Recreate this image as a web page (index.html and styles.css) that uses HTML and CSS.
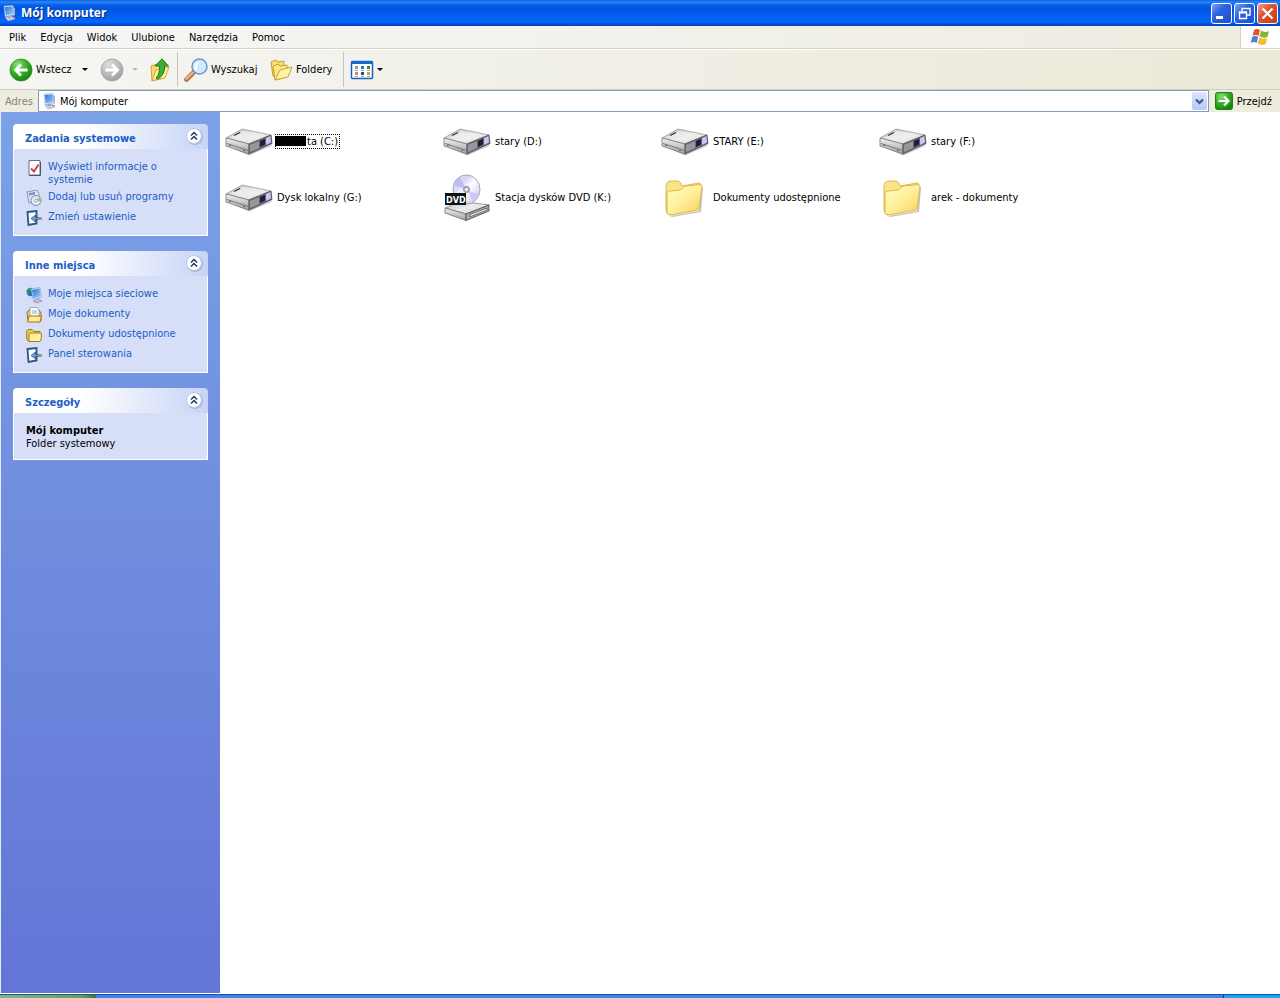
FILE: index.html
```html
<!DOCTYPE html>
<html lang="pl">
<head>
<meta charset="utf-8">
<title>Mój komputer</title>
<link rel="stylesheet" href="styles.css">
</head>
<body>
<svg class="sprite" aria-hidden="true">
  <defs>
    <linearGradient id="gTop" x1="0" y1="0" x2="1" y2="1"><stop offset="0" stop-color="#b4b4b8"/><stop offset=".5" stop-color="#ececec"/><stop offset="1" stop-color="#d4d4d8"/></linearGradient>
    <linearGradient id="gSide" x1="0" y1="0" x2="0" y2="1"><stop offset="0" stop-color="#f4f4f4"/><stop offset="1" stop-color="#9d9da1"/></linearGradient>
    <linearGradient id="gDark" x1="0" y1="0" x2="1" y2="0"><stop offset="0" stop-color="#77777b"/><stop offset="1" stop-color="#5c5c6c"/></linearGradient>
    <linearGradient id="gFolder" x1="0" y1="0" x2="1" y2="1"><stop offset="0" stop-color="#fffbc4"/><stop offset=".5" stop-color="#fff09a"/><stop offset="1" stop-color="#f5cf52"/></linearGradient>
    <linearGradient id="gDisc" x1="0" y1="0" x2="1" y2="1"><stop offset="0" stop-color="#f8f8ff"/><stop offset=".3" stop-color="#d4d4f6"/><stop offset=".5" stop-color="#ffffff"/><stop offset=".75" stop-color="#dcdcf6"/><stop offset="1" stop-color="#ececf6"/></linearGradient>
    <radialGradient id="gGreen" cx=".35" cy=".25" r=".8"><stop offset="0" stop-color="#8fe07a"/><stop offset=".5" stop-color="#37b127"/><stop offset="1" stop-color="#15850f"/></radialGradient>
    <radialGradient id="gGrey" cx=".35" cy=".25" r=".8"><stop offset="0" stop-color="#dedede"/><stop offset=".6" stop-color="#b9b9b9"/><stop offset="1" stop-color="#9e9e9e"/></radialGradient>
    <linearGradient id="gScreen" x1="0" y1="0" x2="1" y2="1"><stop offset="0" stop-color="#2d6fd8"/><stop offset="1" stop-color="#8ed2ff"/></linearGradient>
    <symbol id="drive" viewBox="0 0 48 48">
      <path d="M2 29 24 37 47 27.500 46 29 24 38.500z" fill="#8b8b8b" opacity=".5"/>
      <path d="M1 21 17 12 46 18 24 27z" fill="url(#gTop)" stroke="#929296" stroke-width=".7"/>
      <path d="M6 20.500 18 14 40 18.500 24 25z" fill="#f0f0f0" opacity=".7"/>
      <path d="M1 21 24 27V37L1 29z" fill="url(#gSide)" stroke="#77777b" stroke-width=".8"/>
      <path d="M24 27 46 18 47 26.500 24 37z" fill="url(#gDark)" stroke="#4c4c50" stroke-width=".8"/>
      <path d="M25 28 34 24.300V31L25 35z" fill="#98989c"/>
      <path d="M35 24 40 22V27.500L35 30z" fill="#1c1c44"/>
      <path d="M41 21 45.500 19 46 25.500 41 28z" fill="#c7c7ed"/>
      <path d="M2 26.500 23.500 33.500" fill="none" stroke="#77777b"/>
      <path d="M9 18.500 15 15.500" stroke="#333" stroke-width="1.300"/>
      <path d="M4 28.500h2M18 33.500h2" stroke="#4b7a50"/>
    </symbol>
    <symbol id="dvd" viewBox="0 0 48 48">
      <path d="M2 35 16 28 46 32 23 41z" fill="url(#gTop)" stroke="#828286" stroke-width=".8"/>
      <path d="M2 35 23 41V47.500L2 40z" fill="url(#gSide)" stroke="#6f6f73" stroke-width=".8"/>
      <path d="M23 41 46 32V38L23 47.500z" fill="#aaaaae" stroke="#444" stroke-width=".8"/>
      <path d="M27 41.500 44 35V37L27 43.800z" fill="#eee" stroke="#333" stroke-width=".6"/>
      <ellipse cx="23.500" cy="16.500" rx="13.500" ry="14.500" fill="url(#gDisc)" stroke="#a4a4ae"/>
      <path d="M23 16 17 3.500Q11 6 10 12z" fill="#b5b4ef" opacity=".75"/>
      <path d="M25 18 36 21Q35 26 30 29z" fill="#c6c4f3" opacity=".8"/>
      <circle cx="23.500" cy="16.500" r="3" fill="#b9b9c6" stroke="#85858f"/>
      <circle cx="23.500" cy="16.500" r="1.300" fill="#fff"/>
      <path d="M2 20h21v12H2z" fill="#061313"/>
      <text class="dvd-text" x="3" y="30">DVD</text>
    </symbol>
    <symbol id="folder" viewBox="0 0 48 48">
      <path d="M9 43 38 38 41 14 42 15 40 39 11 44z" fill="#777" opacity=".45"/>
      <path d="M5 14Q5 8 10 8L17 8Q20 9 21 13L38 10Q40 10 40 13L37 36 8 42Q5 40 5 36z" fill="#f9e48a" stroke="#d2ab3b" stroke-width=".8"/>
      <path d="M6 20Q6 18 9 18L19 17 24 13 39 11.500Q41 11.500 41 14L38 35Q38 37 35 37.500L9 42Q6 42 6 39z" fill="url(#gFolder)" stroke="#d3ac3e" stroke-width=".8"/>
    </symbol>
    <symbol id="computer" viewBox="0 0 16 16">
      <path d="M3 12 10 11 13 14 6 16z" fill="#d6d0e0" stroke="#9a92b4" stroke-width=".6"/>
      <path d="M5 11 9 10V13L6 13.500z" fill="#aaa6c4"/>
      <path d="M11 2 13 3V10L11 11z" fill="#b1aec6"/>
      <path d="M2 1 11 .5 12 10 3 11.500z" fill="#dfe8f6" stroke="#90a4cb" stroke-width=".5"/>
      <path d="M2.800 2 10.500 1.500 11.200 9 3.800 10.200z" fill="url(#gScreen)"/>
      <path d="M10 12.500h3" stroke="#e4746a"/>
    </symbol>
    <symbol id="panel" viewBox="0 0 16 16">
      <path d="M1.500 2 10.500 1V13.500L2.500 15z" fill="#fff" stroke="#28548a" stroke-width="1.800"/>
      <path d="M5 8.500 9.500 5V7.500H13V9.500H9.500V12z" fill="#6f9fd5" stroke="#244b7c" stroke-width=".7"/>
      <path d="M12 8.500h4" stroke="#87947d" stroke-width="2.500"/>
    </symbol>
    <symbol id="chevron" viewBox="0 0 18 18">
      <circle cx="10" cy="10" r="8" fill="#8d99bb" opacity=".55"/>
      <circle cx="9" cy="9" r="7.500" fill="#fff" stroke="#bac5e2"/>
      <path d="M6 8.500 9 5.500 12 8.500M6 12.500 9 9.500 12 12.500" fill="none" stroke="#1b2c66" stroke-width="1.400"/>
    </symbol>
  </defs>
</svg>

<div class="window">
  <header class="titlebar">
    <svg class="icon16"><use href="#computer"/></svg>
    <h1 class="title">Mój komputer</h1>
    <button class="caption-btn" aria-label="Minimalizuj"><svg viewBox="0 0 19 19"><path d="M4 12h7v3H4z" fill="#fff"/></svg></button>
    <button class="caption-btn" aria-label="Przywróć"><svg viewBox="0 0 19 19"><path d="M7 7V4.500h8V11h-3M7 4.500h8M4.500 8h7v6.500h-7zM4.500 8.700h7" fill="none" stroke="#fff" stroke-width="1.400"/></svg></button>
    <button class="caption-btn caption-close" aria-label="Zamknij"><svg viewBox="0 0 19 19"><path d="M4.500 4.500l10 10m0-10l-10 10" stroke="#fff" stroke-width="2.200"/></svg></button>
  </header>

  <nav class="menubar" aria-label="Menu">
    <button>Plik</button><button>Edycja</button><button>Widok</button><button>Ulubione</button><button>Narzędzia</button><button>Pomoc</button>
    <span class="flag">
      <svg viewBox="0 0 22 20">
        <path d="M5 3Q8 1 11 3L9.500 9Q6.500 7 3.500 9z" fill="#e5532d"/>
        <path d="M12 3.500Q16 6 20 4L18.500 10Q14.500 11.500 10.500 9.500z" fill="#83b53a"/>
        <path d="M3.200 10Q6 8 9.200 10L7.700 16Q5 14 1.700 16z" fill="#4a7fd8"/>
        <path d="M10.200 10.500Q14 12.500 18.200 11L16.700 17Q12.500 19 8.700 16.500z" fill="#f6bb33"/>
      </svg>
    </span>
  </nav>

  <div class="toolbar">
    <button class="tool tool-back">
      <svg class="icon24" viewBox="0 0 24 24"><circle cx="12" cy="12" r="11" fill="url(#gGreen)" stroke="#2a8a20" stroke-width=".8"/><path d="M18.500 12H7M12 6.500 6.500 12 12 17.500" fill="none" stroke="#fff" stroke-width="2.800"/></svg>
      <span>Wstecz</span><i class="caret"></i>
    </button>
    <button class="tool tool-forward" aria-label="Dalej" disabled>
      <svg class="icon24" viewBox="0 0 24 24"><circle cx="12" cy="12" r="11" fill="url(#gGrey)" stroke="#a2a2a2" stroke-width=".8"/><path d="M5.500 12H17M12 6.500 17.500 12 12 17.500" fill="none" stroke="#fff" stroke-width="2.800"/></svg>
      <i class="caret caret-off"></i>
    </button>
    <button class="tool tool-up" aria-label="Do góry">
      <svg class="icon24" viewBox="0 0 24 24"><path d="M3 8 9 6 11 8 17 7V12L16 20 4 23z" fill="#f7dc6f" stroke="#c79c30" stroke-width=".9"/><path d="M4 22.500 8 12 21 9 17 20z" fill="#fff0a0" stroke="#cda338" stroke-width=".9"/><path d="M8 20Q12 16 11.500 8H7L14 .8 20.500 8H16.500Q17.500 16 10 21z" fill="#3cae32" stroke="#17751a" stroke-width=".9"/></svg>
    </button>
    <span class="divider"></span>
    <button class="tool tool-search">
      <svg class="icon24" viewBox="0 0 24 24"><path d="M2.500 21.500 9.500 14.500" stroke="#b5704c" stroke-width="4.600" stroke-linecap="round"/><path d="M2.500 20.700 9 14.500" stroke="#f2b08a" stroke-width="2.400" stroke-linecap="round"/><circle cx="15.500" cy="8.500" r="7.500" fill="#cfeaff" stroke="#6e93c8" stroke-width="1.400"/><path d="M10.500 8Q11 4 15.500 3.500 12.500 8 13 13 10 11 10.500 8z" fill="#fff"/></svg>
      <span>Wyszukaj</span>
    </button>
    <button class="tool tool-folders">
      <svg class="icon24" viewBox="0 0 24 24"><path d="M2 4 7 2 9 4 15 3V15L4 18z" fill="#f9df74" stroke="#c79d32"/><path d="M4 8 9 6 11 8 18 7V19L6 22z" fill="#fbe584" stroke="#c79d32"/><path d="M6 22 11 12 23 9 19 19z" fill="#fff2a6" stroke="#cda338"/></svg>
      <span>Foldery</span>
    </button>
    <span class="divider"></span>
    <button class="tool tool-views" aria-label="Widoki">
      <svg class="icon24" viewBox="0 0 24 24"><rect x="1.500" y="3.500" width="21" height="17" rx="1" fill="#fff" stroke="#1760bd" stroke-width="1.500"/><path d="M1 3h22v3H1z" fill="#1669cf"/><path d="M5 8h3v3H5z" fill="#839cc0"/><path d="M11 8h3v3h-3z" fill="#3470ba"/><path d="M17 8h3v3h-3z" fill="#2e942e"/><path d="M5 14h3v3H5z" fill="#e08742"/><path d="M11 14h3v3h-3z" fill="#204c8c"/><path d="M17 14h3v3h-3z" fill="#e29a38"/><path d="M5 12.500h3m3 0h3m3 0h3M5 18.500h3m3 0h3m3 0h3" stroke="#999" stroke-width=".9"/></svg>
      <i class="caret"></i>
    </button>
  </div>

  <form class="addressbar">
    <label for="address">Adres</label>
    <div class="combo">
      <svg class="icon16"><use href="#computer"/></svg>
      <input id="address" type="text" value="Mój komputer">
      <button type="button" class="drop" aria-label="Rozwiń"><svg viewBox="0 0 15 17"><path d="M4 6.500 7.500 10 11 6.500" fill="none" stroke="#3d5684" stroke-width="2.200"/></svg></button>
    </div>
    <button type="button" class="go">
      <svg viewBox="0 0 18 18"><rect x=".5" y=".5" width="17" height="17" rx="2" fill="url(#gGreen)" stroke="#197f19"/><path d="M3.500 9H13M9 4.500 13.500 9 9 13.500" fill="none" stroke="#fff" stroke-width="2.200"/></svg>
      <span>Przejdź</span>
    </button>
  </form>

  <div class="content">
    <aside class="sidebar">
      <section class="panel">
        <header><h2>Zadania systemowe</h2><button aria-label="Zwiń"><svg><use href="#chevron"/></svg></button></header>
        <ul>
          <li><a href="#"><svg class="icon16" viewBox="0 0 16 16"><path d="M3 .5H14V15H3z" fill="#fff" stroke="#6a6f93"/><path d="M3 15.500h11.500V2" fill="none" stroke="#4b4f70"/><path d="M5 8.500 8 11.500 12.500 4.500" fill="none" stroke="#d5402d" stroke-width="1.900"/></svg><span>Wyświetl informacje o systemie</span></a></li>
          <li><a href="#"><svg class="icon16" viewBox="0 0 16 16"><path d="M1 2 11 0 13 4V12L3 13z" fill="#dbe5f7" stroke="#8298bf"/><path d="M3 3 9 2V4.500L3 5.500z" fill="#6f94cf"/><circle cx="10" cy="10.500" r="5" fill="#e6ebf5" stroke="#7c89a8"/><path d="M10 10 14 7Q16 9 14.500 12z" fill="#91ca82"/><circle cx="10" cy="10.500" r="1.400" fill="#fff" stroke="#7c89a8" stroke-width=".7"/></svg><span>Dodaj lub usuń programy</span></a></li>
          <li><a href="#"><svg class="icon16"><use href="#panel"/></svg><span>Zmień ustawienie</span></a></li>
        </ul>
      </section>
      <section class="panel">
        <header><h2>Inne miejsca</h2><button aria-label="Zwiń"><svg><use href="#chevron"/></svg></button></header>
        <ul>
          <li><a href="#"><svg class="icon16" viewBox="0 0 16 16"><circle cx="4.500" cy="5" r="4.200" fill="#3aa453"/><path d="M1 3Q3 6 2 8Q6 10 8 8L6 4z" fill="#256fc2"/><path d="M5 2 14 .5 15.500 10 7 12z" fill="#d4e2f8" stroke="#6e86bc" stroke-width=".5"/><path d="M6 3 13.400 1.500 14.600 9.300 7.500 11z" fill="url(#gScreen)"/><path d="M7 14 13 12 16 14 10 16z" fill="#cfbede" stroke="#8e78aa" stroke-width=".7"/></svg><span>Moje miejsca sieciowe</span></a></li>
          <li><a href="#"><svg class="icon16" viewBox="0 0 16 16"><path d="M1 5 3 3H13L15 6V14H2z" fill="#f3cc54" stroke="#9e7322"/><path d="M4 .5H11L13 3V10H4z" fill="#fff" stroke="#7d94bc" stroke-width=".8"/><path d="M6 4h5M6 6h5" stroke="#87a5d7"/><path d="M3 9H15.500L14 15H1.500z" fill="#ffeb91" stroke="#9e7322"/></svg><span>Moje dokumenty</span></a></li>
          <li><a href="#"><svg class="icon16" viewBox="0 0 16 16"><path d="M.7 4 2 2.500H6L8 4.500H14V14H2L.7 12z" fill="#f1c94f" stroke="#a77d24"/><path d="M3 7.500Q3 6 5 6H15.300V12L14 14.500H3z" fill="#fff09b" stroke="#a77d24"/></svg><span>Dokumenty udostępnione</span></a></li>
          <li><a href="#"><svg class="icon16"><use href="#panel"/></svg><span>Panel sterowania</span></a></li>
        </ul>
      </section>
      <section class="panel">
        <header><h2>Szczegóły</h2><button aria-label="Zwiń"><svg><use href="#chevron"/></svg></button></header>
        <div class="details"><strong>Mój komputer</strong><p>Folder systemowy</p></div>
      </section>
    </aside>

    <main class="files">
      <a class="file" href="#"><svg><use href="#drive"/></svg><span class="focused"><i class="mask"></i>ta (C:)</span></a>
      <a class="file" href="#"><svg><use href="#drive"/></svg><span>stary (D:)</span></a>
      <a class="file" href="#"><svg><use href="#drive"/></svg><span>STARY (E:)</span></a>
      <a class="file" href="#"><svg><use href="#drive"/></svg><span>stary (F:)</span></a>
      <a class="file" href="#"><svg><use href="#drive"/></svg><span>Dysk lokalny (G:)</span></a>
      <a class="file" href="#"><svg><use href="#dvd"/></svg><span>Stacja dysków DVD (K:)</span></a>
      <a class="file" href="#"><svg><use href="#folder"/></svg><span>Dokumenty udostępnione</span></a>
      <a class="file" href="#"><svg><use href="#folder"/></svg><span>arek - dokumenty</span></a>
    </main>
  </div>
  <footer class="taskbar"><span class="start"></span><span class="tray"></span></footer>
</div>
</body>
</html>
```
FILE: styles.css
```css
* { box-sizing: border-box; }

body {
  margin: 0;
  font: 11px/13px "DejaVu Sans Condensed", "DejaVu Sans", sans-serif;
  color: #000;
}

button, input { font: inherit; color: inherit; border: 0; padding: 0; margin: 0; background: none; }
h1, h2, p, ul { margin: 0; padding: 0; }
ul { list-style: none; }
a { color: inherit; text-decoration: none; }
svg { display: block; flex: none; }

.sprite { position: absolute; width: 0; height: 0; }
.icon16 { width: 16px; height: 16px; }
.icon24 { width: 24px; height: 24px; }

.window { display: flex; flex-direction: column; min-height: 100vh; background: #fff; }

.titlebar {
  display: flex;
  align-items: center;
  gap: 2px;
  height: 26px;
  padding: 0 2px;
  background: linear-gradient(#0a5ddd 0, #2a86fb 2px, #0860e6 5px, #0055e0 9px, #0462f5 18px, #0566fa 22px, #0048c8 25px, #0040b4 26px);
}
.title {
  flex: 1;
  padding-left: 1px;
  font: bold 12px/16px "Open Sans", sans-serif;
  color: #fff;
  text-shadow: 1px 1px 1px #0a2a80;
}
.caption-btn {
  width: 21px;
  height: 21px;
  border: 1px solid #fff;
  border-radius: 3px;
  background: linear-gradient(135deg, #7ba1f3, #2b62e0 40%, #1d4fd2);
}
.caption-close { background: linear-gradient(135deg, #f0a287, #df5432 40%, #c63a18); }

.menubar { display: flex; height: 23px; padding-left: 9px; gap: 14px; background: linear-gradient(90deg, #f6f6f6, #eeece0); border-bottom: 1px solid #d6d2c2; }
.flag { width: 40px; margin-left: auto; background: #fff; border-left: 1px solid #d6d2c2; }
.flag svg { width: 22px; height: 20px; margin: 1px 0 0 8px; }

.toolbar {
  display: flex;
  align-items: center;
  height: 41px;
  padding-left: 9px;
  background: linear-gradient(90deg, #f5f5f3, #ece9d8);
  border-top: 1px solid #fff;
  border-bottom: 1px solid #d0cdbf;
}
.tool { display: flex; align-items: center; gap: 3px; }
.tool-back { width: 91px; }
.tool-forward { width: 48px; }
.tool-up { width: 29px; }
.tool-search { width: 85px; }
.tool-folders { width: 74px; }
.divider { align-self: stretch; margin: 2px 6px 2px 0; width: 1px; background: #c8c5b6; }
.caret { border: 3px solid transparent; border-top-color: #000; border-bottom: 0; }
.tool-back .caret { margin: 0 12px 0 auto; }
.tool-forward .caret { margin-left: 5px; }
.caret-off { border-top-color: #bbb; }

.addressbar { display: flex; align-items: center; height: 22px; padding: 0 8px 0 5px; background: #eeecdf; }
.addressbar label { width: 33px; color: #85847b; }
.combo { display: flex; align-items: center; flex: 1; min-width: 0; height: 22px; padding: 0 1px 0 3px; border: 1px solid #7f9db9; background: #fff; }
.combo input { flex: 1; min-width: 0; padding-left: 2px; outline: 0; }
.drop { width: 15px; height: 18px; border-radius: 2px; background: linear-gradient(#dbe5fe, #b5c9f5); }
.go { display: flex; align-items: center; gap: 4px; padding-left: 6px; }
.go svg { width: 18px; height: 18px; }

.content { display: flex; flex: 1; }
.sidebar {
  display: flex;
  flex-direction: column;
  gap: 15px;
  flex: none;
  width: 220px;
  padding: 12px;
  border-left: 1px solid #e4ecfb;
  background: linear-gradient(#7ba2e7, #6375d6);
}
.panel header {
  display: flex;
  align-items: center;
  justify-content: space-between;
  height: 25px;
  padding: 0 5px 0 12px;
  border-radius: 4px 4px 0 0;
  background: linear-gradient(90deg, #fff 35%, #c7d4f7);
}
.panel h2 { padding-top: 3px; font: bold 11px/13px "DejaVu Sans Condensed", "DejaVu Sans", sans-serif; color: #215dc6; }
.panel header button { padding-bottom: 2px; }
.panel header svg { width: 18px; height: 18px; }
.panel ul, .details { padding: 11px 12px 9px; border: 1px solid #fff; border-top: 0; background: #d6dff7; }
.panel ul { display: flex; flex-direction: column; gap: 4px; color: #215dc6; }
.panel a { display: flex; gap: 6px; min-height: 16px; }

.files { display: grid; grid-template-columns: repeat(auto-fill, 218px); grid-auto-rows: 56px; align-content: start; flex: 1; padding: 1px 0 0 5px; }
.file { display: flex; align-items: center; gap: 4px; }
.file svg { width: 48px; height: 48px; }
.focused { display: flex; align-items: center; height: 15px; margin-left: -2px; padding-right: 2px; outline: 1px dotted #000; outline-offset: -1px; }
.mask { width: 31px; height: 10px; margin-right: 1px; background: #000; }
.dvd-text { font: bold 9px "DejaVu Sans Condensed", sans-serif; fill: #fff; }

.taskbar { display: flex; height: 4px; margin-top: 1px; background: #3a85ea; border-top: 1px solid #1f4fa8; }
.start { width: 96px; background: linear-gradient(90deg, #7dba7b, #5aa650 85%, #2e7d2e); }
.tray { width: 57px; margin-left: auto; border-left: 1px solid #0b3c94; background: #18a5f3; }
```
